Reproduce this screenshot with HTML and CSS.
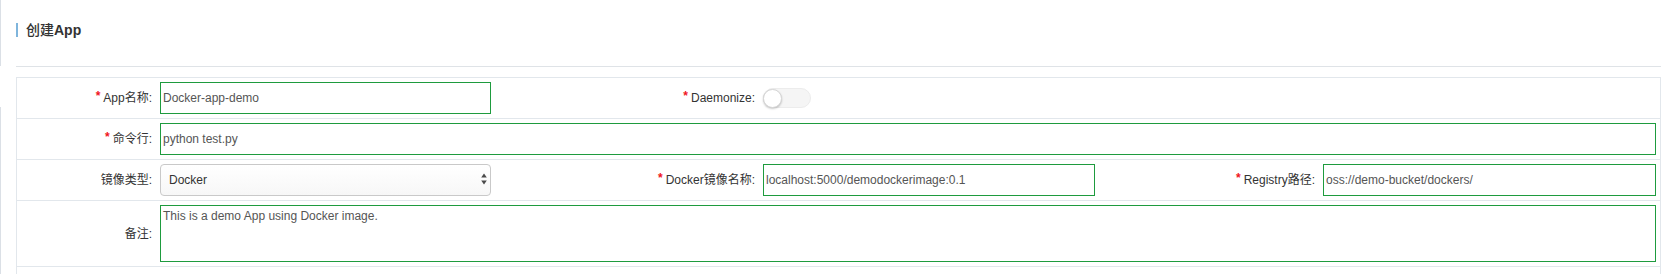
FILE: index.html
```html
<!DOCTYPE html>
<html lang="zh-CN">
<head>
<meta charset="utf-8">
<title>创建App</title>
<link rel="stylesheet" href="styles.css">
</head>
<body>
<div class="page">
  <div class="rail">
    <span class="rail-top"></span>
    <span class="rail-gap"></span>
    <span class="rail-bottom"></span>
  </div>
  <main class="content">
    <header class="page-head">
      <h1 class="title"><span class="title-cn">创建</span><b class="title-en">App</b></h1>
    </header>
    <form class="form-table">
      <div class="row">
        <label class="cell label"><span class="req">*</span>App名称:</label>
        <div class="cell field"><input class="input" type="text" value="Docker-app-demo"></div>
        <label class="cell label"><span class="req">*</span>Daemonize:</label>
        <div class="cell field"><span class="switch" role="switch" aria-checked="false"><span class="knob"></span></span></div>
        <div class="cell"></div>
        <div class="cell"></div>
      </div>
      <div class="row">
        <label class="cell label"><span class="req">*</span>命令行:</label>
        <div class="cell field span-rest"><input class="input" type="text" value="python test.py"></div>
      </div>
      <div class="row">
        <label class="cell label">镜像类型:</label>
        <div class="cell field">
          <div class="select-wrap">
            <select class="select"><option>Docker</option></select>
            <svg class="select-arrows" width="6" height="12" viewBox="0 0 6 12" aria-hidden="true">
              <path d="M3 0.5 L5.8 4.6 L0.2 4.6 Z" fill="#4a4a4a"/>
              <path d="M3 11.5 L5.8 7.4 L0.2 7.4 Z" fill="#4a4a4a"/>
            </svg>
          </div>
        </div>
        <label class="cell label"><span class="req">*</span>Docker镜像名称:</label>
        <div class="cell field"><input class="input" type="text" value="localhost:5000/demodockerimage:0.1"></div>
        <label class="cell label"><span class="req">*</span>Registry路径:</label>
        <div class="cell field"><input class="input" type="text" value="oss://demo-bucket/dockers/"></div>
      </div>
      <div class="row">
        <label class="cell label">备注:</label>
        <div class="cell field span-rest"><textarea class="textarea">This is a demo App using Docker image.</textarea></div>
      </div>
      <div class="table-tail"></div>
    </form>
  </main>
</div>
</body>
</html>
```

FILE: styles.css
```css
* {
  box-sizing: border-box;
}

html, body {
  margin: 0;
  padding: 0;
  background: #fff;
}

body {
  font-family: "Liberation Sans", "Noto Sans CJK SC", sans-serif;
  font-size: 12px;
  color: #333;
}

.page {
  display: flex;
  height: 274px;
  overflow: hidden;
}

.rail {
  display: flex;
  flex-direction: column;
  width: 1px;
  flex: none;
}

.rail-top {
  height: 66px;
  background: #dbe0e6;
}

.rail-gap {
  height: 41px;
}

.rail-bottom {
  flex: 1;
  background: #dbe0e6;
}

.content {
  flex: 1;
  margin-left: 15px;
  margin-right: 4px;
}

.page-head {
  height: 67px;
  padding-top: 23px;
  border-bottom: 1px solid #dfe3e7;
}

.title {
  margin: 0;
  height: 14px;
  padding-left: 8px;
  border-left: 2px solid #7fb5dc;
  font-size: 14px;
  line-height: 14px;
  color: #333;
  font-weight: normal;
  white-space: nowrap;
}

.title-cn {
  font-weight: 500;
}

.title-en {
  font-weight: bold;
}

.form-table {
  margin: 10px 0 0;
  border: 1px solid #e2e7ec;
  border-bottom: none;
}

.row {
  display: grid;
  grid-template-columns: 139px 339px 264px 340px 220px 341px;
  border-bottom: 1px solid #e2e7ec;
}

.cell {
  padding: 4px;
  display: flex;
  align-items: center;
  min-height: 40px;
}

.label {
  justify-content: flex-end;
  white-space: nowrap;
  line-height: 16px;
  color: #333;
}

.req {
  color: #f0141e;
  font-weight: bold;
  margin-right: 3px;
  position: relative;
  top: -2px;
}

.span-rest {
  grid-column: 2 / 7;
}

.input {
  display: block;
  width: 100%;
  height: 32px;
  margin: 0;
  padding: 0 2px;
  border: 1px solid #1e9b3e;
  border-radius: 0;
  background: #fff;
  font-family: "Liberation Sans", "Noto Sans CJK SC", sans-serif;
  font-size: 12px;
  color: #555;
  outline: none;
}

.textarea {
  display: block;
  width: 100%;
  height: 57px;
  margin: 0;
  padding: 2px 2px;
  border: 1px solid #1e9b3e;
  border-radius: 0;
  background: #fff;
  font-family: "Liberation Sans", "Noto Sans CJK SC", sans-serif;
  font-size: 12px;
  line-height: 16px;
  color: #555;
  resize: none;
  outline: none;
}

.select-wrap {
  position: relative;
  width: 100%;
}

.select {
  display: block;
  width: 100%;
  height: 32px;
  margin: 0;
  padding: 0 8px;
  -webkit-appearance: none;
  appearance: none;
  border: 1px solid #c9c9c9;
  border-radius: 4px;
  background: linear-gradient(#ffffff, #f7f7f7);
  font-family: "Liberation Sans", "Noto Sans CJK SC", sans-serif;
  font-size: 12px;
  color: #333;
  outline: none;
}

.select-arrows {
  position: absolute;
  right: 4px;
  top: 9px;
  pointer-events: none;
}

.switch {
  display: flex;
  align-items: center;
  width: 48px;
  height: 20px;
  border: 1px solid #ececec;
  border-radius: 10px;
  background: #f5f5f5;
}

.knob {
  width: 19px;
  height: 19px;
  margin-left: -1px;
  border-radius: 50%;
  background: #fff;
  border: 1px solid #d6d6d6;
  box-shadow: 0 1px 2px rgba(0, 0, 0, 0.22);
}

.table-tail {
  height: 7px;
}
```
